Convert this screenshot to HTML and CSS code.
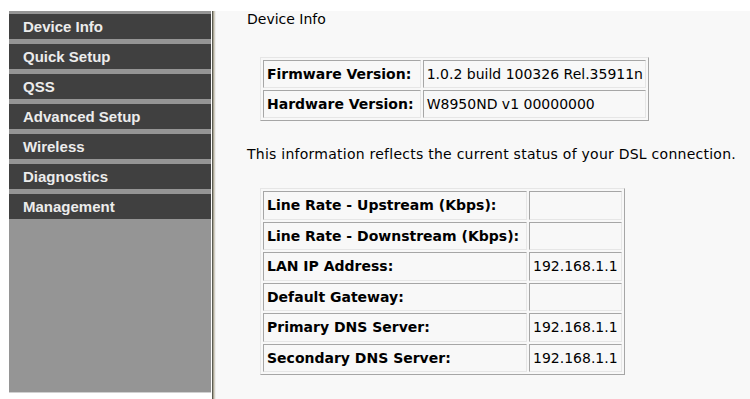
FILE: index.html
```html
<!DOCTYPE html>
<html>
<head>
<meta charset="utf-8">
<title>Device Info</title>
<link rel="stylesheet" href="styles.css">
</head>
<body>
<div class="page">
  <div class="left">
    <div class="sidebar">
      <div class="menu-item">Device Info</div>
      <div class="menu-item">Quick Setup</div>
      <div class="menu-item">QSS</div>
      <div class="menu-item">Advanced Setup</div>
      <div class="menu-item">Wireless</div>
      <div class="menu-item">Diagnostics</div>
      <div class="menu-item">Management</div>
    </div>
  </div>
  <div class="divider"></div>
  <div class="main">
    <div class="heading">Device Info</div>
    <table class="info info-fw">
      <tr><td class="label">Firmware Version:</td><td>1.0.2 build 100326 Rel.35911n</td></tr>
      <tr><td class="label">Hardware Version:</td><td>W8950ND v1 00000000</td></tr>
    </table>
    <p class="note">This information reflects the current status of your DSL connection.</p>
    <table class="info info-dsl">
      <tr><td class="label">Line Rate - Upstream (Kbps):</td><td></td></tr>
      <tr><td class="label">Line Rate - Downstream (Kbps):</td><td></td></tr>
      <tr><td class="label">LAN IP Address:</td><td>192.168.1.1</td></tr>
      <tr><td class="label">Default Gateway:</td><td></td></tr>
      <tr><td class="label">Primary DNS Server:</td><td>192.168.1.1</td></tr>
      <tr><td class="label">Secondary DNS Server:</td><td>192.168.1.1</td></tr>
    </table>
  </div>
</div>
</body>
</html>
```

FILE: styles.css
```css
html, body {
  margin: 0;
  padding: 0;
  background: #ffffff;
}

.page {
  display: flex;
  padding-top: 11px;
  height: 388px;
}

.left {
  width: 211px;
  box-sizing: border-box;
  padding-left: 9px;
  background: #ffffff;
  flex: none;
}

.sidebar {
  width: 202px;
  height: 382px;
  box-sizing: border-box;
  background: #959595;
  padding-top: 3px;
  border-bottom: 1px solid #d0d0d0;
}

.menu-item {
  height: 25px;
  line-height: 25px;
  margin-bottom: 5px;
  padding-left: 14px;
  background: #404040;
  color: #ececec;
  font-family: "Liberation Sans", Arial, sans-serif;
  font-weight: bold;
  font-size: 15px;
}

.divider {
  width: 5px;
  flex: none;
  background: linear-gradient(to right, #ffffff 0 1px, #5c5c52 1px 2px, #a8a494 2px 3px, #d4d0c4 3px 4px, #ececec 4px 5px);
}

.main {
  flex: 1;
  background: #f8f8f8;
  padding-left: 31px;
  font-family: "DejaVu Sans", Verdana, sans-serif;
  font-size: 14px;
  color: #000;
}

.heading {
  padding-top: 0;
  line-height: 17px;
}

.info {
  border-collapse: separate;
  border-spacing: 2px;
  border: 1px solid;
  border-color: #e6e6e6 #a6a6a6 #a6a6a6 #e6e6e6;
  margin-left: 13px;
  line-height: 17px;
}

.info td {
  border: 1px solid;
  border-color: #a6a6a6 #e6e6e6 #e6e6e6 #a6a6a6;
  padding: 5px 2px 4px 3px;
  white-space: nowrap;
}

.info .label {
  font-weight: bold;
}

.info-fw {
  margin-top: 29px;
  width: 389px;
}

.info-fw .label {
  width: 151px;
}

.info-dsl {
  width: 365px;
}

.info-dsl td {
  padding-bottom: 4.5px;
}

.info-dsl .label {
  width: 257px;
}

.note {
  margin: 25px 0 25px 0;
  line-height: 17px;
  letter-spacing: 0.25px;
}
```
